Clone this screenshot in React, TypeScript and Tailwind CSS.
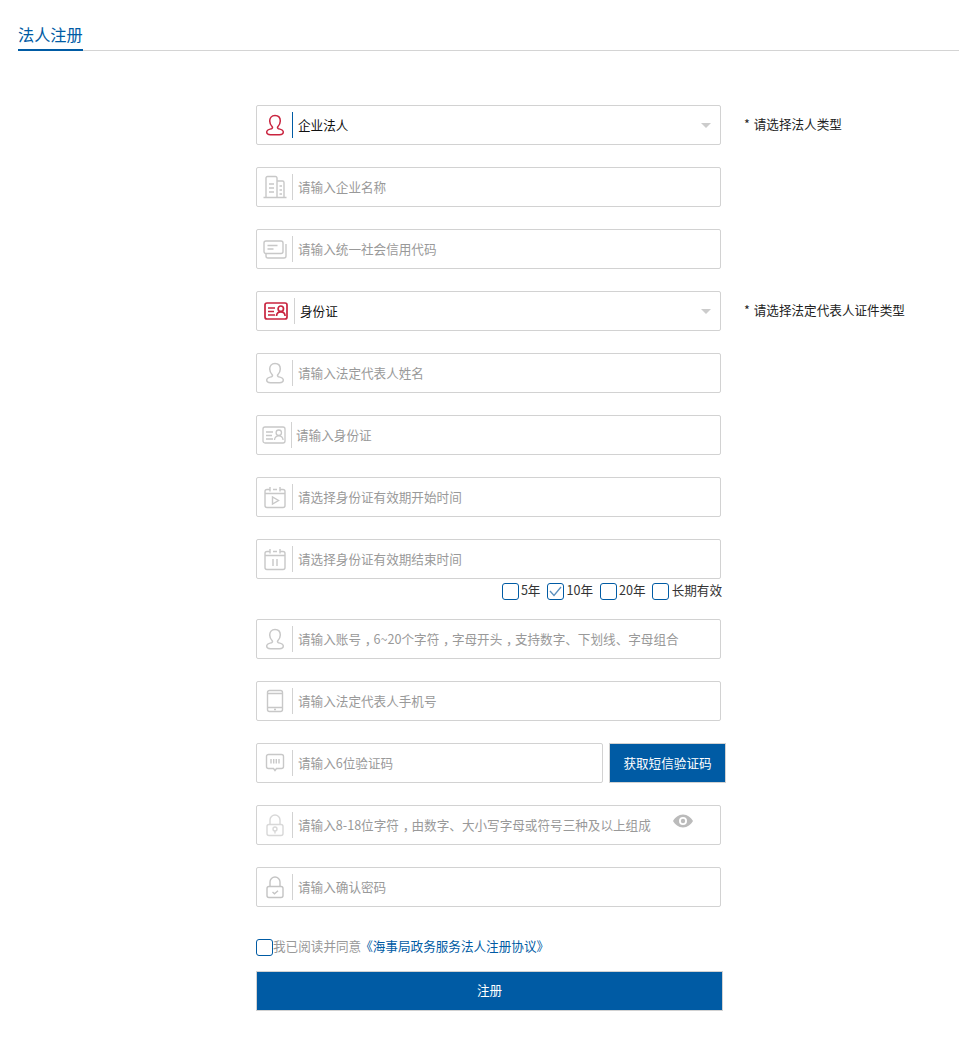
import React from 'react';

const GRAY = '#c8c8c8';
const RED = '#c9243f';

type IconProps = { color?: string };

const PersonIcon = ({ color = GRAY }: IconProps) => (
  <svg width="24" height="24" viewBox="0 0 24 24" fill="none" stroke={color} strokeWidth="1.5">
    <path d="M12 2.500C8.500 2.500 6.700 5 6.700 8c0 2.500 1.300 4.500 2.500 5.700.6.7.3 1.600-.6 2-2.100.6-4.900 1.100-4.900 3.300 0 2 1.800 2.700 3.800 2.700h9c2 0 3.800-.7 3.800-2.700 0-2.200-2.800-2.700-4.900-3.300-.9-.4-1.200-1.300-.6-2 1.200-1.200 2.500-3.200 2.500-5.700 0-3-1.800-5.500-5.300-5.500z" />
  </svg>
);

const BuildingIcon = () => (
  <svg width="24" height="24" viewBox="0 0 24 24" fill="none" stroke={GRAY} strokeWidth="1.4">
    <path d="M0.500 22.500h23M3 22.500V3a1.500 1.500 0 0 1 1.500-1.500h8A1.500 1.500 0 0 1 14 3v19.500M14 6h5.500A1.500 1.500 0 0 1 21 7.500v15" />
    <path d="M6 9h5M6 13h5M6 17h5M16.500 11h2.500M16.500 15h2.500M16.500 19h2.500" />
  </svg>
);

const CardsIcon = () => (
  <svg width="24" height="24" viewBox="0 0 24 24" fill="none" stroke={GRAY} strokeWidth="1.4">
    <rect x="1" y="4" width="19" height="12.500" rx="2" />
    <path d="M4.500 8.500h10M4.500 12h6M23 7v12a2 2 0 0 1-2 2H5a2 2 0 0 1-2-2v-2.500" />
  </svg>
);

const IdIcon = ({ color = GRAY, bold = false }: IconProps & { bold?: boolean }) => (
  <svg width="24" height="24" viewBox="0 0 24 24" fill="none" stroke={color} strokeWidth={bold ? 1.7 : 1.3}>
    <rect x="1" y="4" width="22" height="16" rx="2" />
    <path d="M4 9h7M4 12.500h6M4 16h7" />
    <circle cx="16.800" cy="9.700" r="2.700" />
    <path d="M12.500 17c.2-2.600 2-4.100 4.300-4.100s4.100 1.500 4.300 4.100" />
  </svg>
);

const CalendarIcon = ({ children }: { children: React.ReactNode }) => (
  <svg width="24" height="24" viewBox="0 0 24 24" fill="none" stroke={GRAY} strokeWidth="1.4">
    <path d="M7 4.500H4a2 2 0 0 0-2 2v14a2 2 0 0 0 2 2h16a2 2 0 0 0 2-2v-14a2 2 0 0 0-2-2h-3M10 4.500h4M2 8.500h20M7 2v4.500M17 2v4.500" />
    {children}
  </svg>
);

const PhoneIcon = () => (
  <svg width="24" height="24" viewBox="0 0 24 24" fill="none" stroke={GRAY} strokeWidth="1.4">
    <rect x="4.500" y="1.500" width="15" height="21" rx="2" />
    <path d="M4.500 4.500h15M4.500 18.500h15M11 20.500h2" />
  </svg>
);

const SmsIcon = () => (
  <svg width="24" height="24" viewBox="0 0 24 24" fill="none" stroke={GRAY} strokeWidth="1.4">
    <path d="M5.500 3.500h13a2 2 0 0 1 2 2v10a2 2 0 0 1-2 2h-5L12 19.500l-1.500-2h-5a2 2 0 0 1-2-2v-10a2 2 0 0 1 2-2z" />
    <path d="M8 8v4.500M10.700 8v4.500M13.300 8v4.500M16 8v4.500" />
  </svg>
);

const LockIcon = ({ check = false }: { check?: boolean }) => (
  <svg width="24" height="24" viewBox="0 0 24 24" fill="none" stroke={check ? '#c4c4c4' : '#d8d8d8'} strokeWidth="1.4">
    <path d="M7 11.500V7a5 5 0 0 1 10 0v4.500" />
    <rect x="4" y="11.500" width="16" height="11" rx="2" />
    {check ? (
      <path d="M9.500 17l2 1.800 3.500-3" />
    ) : (
      <>
        <circle cx="12" cy="16" r="2" />
        <path d="M12 18v2.500" />
      </>
    )}
  </svg>
);

const EyeIcon = () => (
  <svg width="20" height="14" viewBox="0 0 20 14" fill="#bbbbbb">
    <path fillRule="evenodd" d="M10 0.500C5.500 0.500 2 3.500 0 7c2 3.500 5.500 6.500 10 6.500S18 10.500 20 7C18 3.500 14.500 0.500 10 0.500zM10 3a4 4 0 1 1 0 8 4 4 0 0 1 0-8z" />
    <circle cx="10" cy="7" r="2.200" />
  </svg>
);

const Caret = () => (
  <span className="absolute left-[444px] top-[17px] h-0 w-0 border-x-[5px] border-t-[5px] border-x-transparent border-t-[#cccccc]" />
);

const Check = ({ checked = false }: { checked?: boolean }) => (
  <span className="flex h-[17px] w-[17px] shrink-0 items-center justify-center rounded-[3px] border border-[#005ba4] bg-white">
    {checked && (
      <svg width="13" height="11" viewBox="0 0 13 11" fill="none" stroke="#5b8fbd" strokeWidth="1.3">
        <path d="M1 5l4 4.500L12 1" />
      </svg>
    )}
  </span>
);

// the reference's full-width commas sit in the middle of their box
const Comma = () => <span className="pl-[0.3em] tracking-[-0.3em]">，</span>;

interface FieldProps {
  icon: React.ReactNode;
  text: React.ReactNode;
  filled?: boolean;
  iconWidth?: string;
  textGap?: string;
  dividerClass?: string;
  width?: string;
  children?: React.ReactNode;
}

const Field = ({
  icon,
  text,
  filled = false,
  iconWidth = 'w-[35px]',
  textGap = 'pl-[5px]',
  dividerClass = 'bg-[#d2d2d2]',
  width = 'w-[465px]',
  children,
}: FieldProps) => (
  <div className={`relative flex h-10 shrink-0 items-center rounded-[2px] border border-[#d2d2d2] bg-white ${width}`}>
    <span className={`flex h-full shrink-0 items-center justify-center ${iconWidth}`}>{icon}</span>
    <span className={`h-[26px] w-px shrink-0 ${dividerClass}`} />
    <span className={`${textGap} whitespace-nowrap text-[12.6px] ${filled ? 'text-[#111111]' : 'text-[#999999]'}`}>
      {text}
    </span>
    {children}
  </div>
);

const Hint = ({ text }: { text: string }) => (
  <span className="pb-[2px] pl-[23px] text-[12.6px] whitespace-nowrap text-[#222222]">
    <span className="pr-[1px]">*</span> {text}
  </span>
);

export default function App() {
  return (
    <div className="h-[1043px] overflow-hidden bg-white pt-[25px] pr-[4px] pl-[18px] font-['Noto_Sans_CJK_SC','Microsoft_YaHei',sans-serif]">
      <div className="flex h-[26px] items-start border-b border-[#d4d4d4]">
        <span className="h-[26px] border-b-2 border-[#005ba4] text-[16.2px] leading-[19px] text-[#005ba4]">
          法人注册
        </span>
      </div>

      <div className="flex flex-col pt-[54px] pl-[238px]">
        <div className="flex items-center">
          <Field icon={<PersonIcon color={RED} />} text="企业法人" filled dividerClass="bg-[#005ba4]">
            <Caret />
          </Field>
          <Hint text="请选择法人类型" />
        </div>
        <div className="mt-[22px]">
          <Field icon={<BuildingIcon />} text="请输入企业名称" />
        </div>
        <div className="mt-[22px]">
          <Field icon={<CardsIcon />} text="请输入统一社会信用代码" />
        </div>
        <div className="mt-[22px] flex items-center">
          <Field icon={<IdIcon color={RED} bold />} text="身份证" filled iconWidth="w-[37px]">
            <Caret />
          </Field>
          <Hint text="请选择法定代表人证件类型" />
        </div>
        <div className="mt-[22px]">
          <Field icon={<PersonIcon />} text="请输入法定代表人姓名" />
        </div>
        <div className="mt-[22px]">
          <Field icon={<IdIcon />} text="请输入身份证" iconWidth="w-[34px]" textGap="pl-[4px]" />
        </div>
        <div className="mt-[22px]">
          <Field
            icon={
              <CalendarIcon>
                <path d="M9.500 12v7l6-3.500z" />
              </CalendarIcon>
            }
            text="请选择身份证有效期开始时间"
          />
        </div>
        <div className="mt-[22px]">
          <Field
            icon={
              <CalendarIcon>
                <path d="M10 12v7M14 12v7" />
              </CalendarIcon>
            }
            text="请选择身份证有效期结束时间"
          />
        </div>

        <div className="flex h-10 w-[466px] items-start justify-end pt-[4px] text-[12.6px] leading-[14px] text-[#333333]">
          <Check />
          <span className="pr-[7px] pl-[2px]">5年</span>
          <Check checked />
          <span className="pr-[7px] pl-[2px]">10年</span>
          <Check />
          <span className="pr-[6px] pl-[2px]">20年</span>
          <Check />
          <span className="pl-[3px]">长期有效</span>
        </div>

        <Field
          icon={<PersonIcon />}
          text={
            <>
              请输入账号<Comma />6~20个字符<Comma />字母开头<Comma />支持数字、下划线、字母组合
            </>
          }
        />
        <div className="mt-[22px]">
          <Field icon={<PhoneIcon />} text="请输入法定代表人手机号" />
        </div>
        <div className="mt-[22px] flex">
          <Field icon={<SmsIcon />} text="请输入6位验证码" width="w-[347px]" />
          <button className="ml-[6px] h-10 w-[117px] shrink-0 border border-[#d2d2d2] bg-[#005ba4] pt-[1px] text-[12.6px] text-white">
            获取短信验证码
          </button>
        </div>
        <div className="mt-[22px]">
          <Field
            icon={<LockIcon />}
            text={
              <>
                请输入8-18位字符<Comma />由数字、大小写字母或符号三种及以上组成
              </>
            }
          >
            <span className="absolute top-[8px] left-[416px] flex">
              <EyeIcon />
            </span>
          </Field>
        </div>
        <div className="mt-[22px]">
          <Field icon={<LockIcon check />} text="请输入确认密码" />
        </div>

        <div className="mt-[32px] flex h-[17px] items-center text-[12.6px]">
          <Check />
          <span className="pb-[2px] text-[#999999]">我已阅读并同意</span>
          <span className="-ml-[1px] pb-[2px] text-[#005ba4]">《海事局政务服务法人注册协议》</span>
        </div>
        <button className="mt-[15px] h-10 w-[467px] border border-[#d2d2d2] bg-[#005ba4] pb-[2px] text-[12.6px] text-white">
          注册
        </button>
      </div>
    </div>
  );
}
